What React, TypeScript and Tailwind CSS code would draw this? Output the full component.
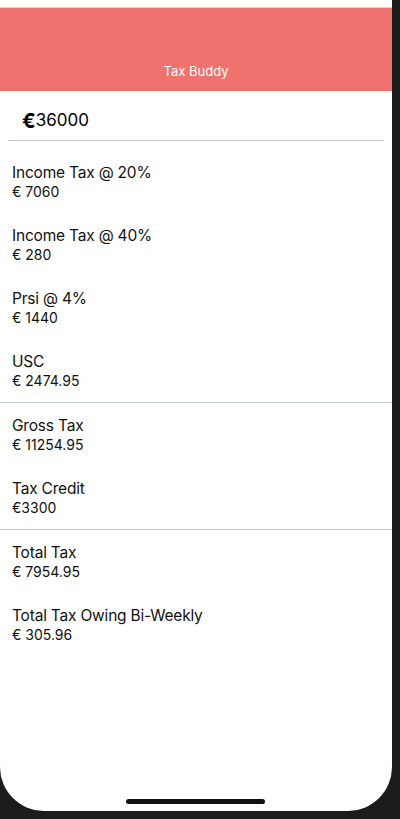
import React from 'react'

const groups = [
  [
    { label: 'Income Tax @ 20%', value: '€ 7060' },
    { label: 'Income Tax @ 40%', value: '€ 280' },
    { label: 'Prsi @ 4%', value: '€ 1440' },
    { label: 'USC', value: '€ 2474.95' },
  ],
  [
    { label: 'Gross Tax', value: '€ 11254.95' },
    { label: 'Tax Credit', value: '€3300' },
  ],
  [
    { label: 'Total Tax', value: '€ 7954.95' },
    { label: 'Total Tax Owing Bi-Weekly', value: '€ 305.96' },
  ],
]

export default function App() {
  return (
    <div className="w-[400px] h-[819px] bg-[#1c1c1c] flex font-['Inter',sans-serif]">
      <div className="relative w-[392px] h-[811px] bg-white rounded-b-[44px] overflow-hidden flex flex-col">
        {/* Header */}
        <div className="h-[8px] bg-white border-b border-[#f6c9c7]" />
        <div className="h-[83px] bg-[#ee736f] flex items-end justify-center pb-[12px]">
          <span className="text-white text-[13px] leading-[16px]">Tax Buddy</span>
        </div>

        {/* Salary input */}
        <div className="px-2 pt-[10px]">
          <div className="h-[40px] flex items-center pl-[14px] border-b border-[#c5c9cd]">
            <span className="text-[20px] font-bold leading-none text-black">€</span>
            <span className="text-[17px] leading-none text-black">36000</span>
          </div>
        </div>

        {/* Results */}
        <div className="mt-[9px] flex flex-col">
          {groups.map((group, gi) => (
            <div
              key={gi}
              className={gi < groups.length - 1 ? 'border-b border-[#c3cccc]' : ''}
            >
              {group.map((item) => (
                <div key={item.label} className="h-[63px] px-3 pt-[13px] flex flex-col">
                  <span className="text-[15.5px] leading-[20px] tracking-[-0.2px] text-[#111]">{item.label}</span>
                  <span className="text-[14px] leading-[17px] text-[#111]">{item.value}</span>
                </div>
              ))}
            </div>
          ))}
        </div>

        {/* Home indicator */}
        <div className="absolute bottom-[7px] left-[126px] w-[139px] h-[5px] rounded-full bg-[#111]" />
      </div>
    </div>
  )
}
